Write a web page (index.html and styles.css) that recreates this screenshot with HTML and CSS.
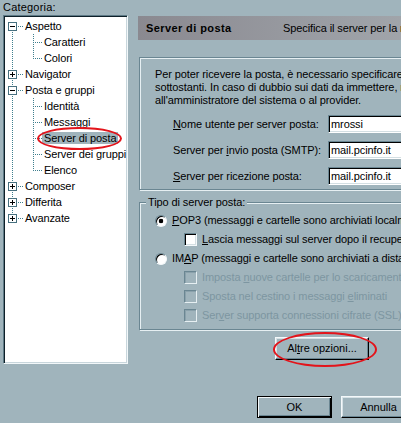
FILE: index.html
```html
<!DOCTYPE html>
<html lang="it">
<head>
<meta charset="utf-8">
<title>Preferenze – Server di posta</title>
<link rel="stylesheet" href="styles.css">
</head>
<body>
<div class="window">
  <aside class="cat">
    <div class="cat-label">Categoria:</div>
    <div class="tree">
      <div class="row"><span class="g root-first"><span class="box minus"></span></span><span class="lbl">Aspetto</span></div>
      <div class="row"><span class="g root-pass"></span><span class="c c-mid"></span><span class="lbl">Caratteri</span></div>
      <div class="row"><span class="g root-pass"></span><span class="c c-last"></span><span class="lbl">Colori</span></div>
      <div class="row"><span class="g root-mid"><span class="box plus"></span></span><span class="lbl">Navigator</span></div>
      <div class="row"><span class="g root-mid"><span class="box minus"></span></span><span class="lbl">Posta e gruppi</span></div>
      <div class="row"><span class="g root-pass"></span><span class="c c-mid"></span><span class="lbl">Identità</span></div>
      <div class="row"><span class="g root-pass"></span><span class="c c-mid"></span><span class="lbl">Messaggi</span></div>
      <div class="row"><span class="g root-pass"></span><span class="c c-mid"></span><span class="lbl sel">Server di posta<span class="mark mark-tree"></span></span></div>
      <div class="row"><span class="g root-pass"></span><span class="c c-mid"></span><span class="lbl">Server dei gruppi</span></div>
      <div class="row"><span class="g root-pass"></span><span class="c c-last"></span><span class="lbl">Elenco</span></div>
      <div class="row"><span class="g root-mid"><span class="box plus"></span></span><span class="lbl">Composer</span></div>
      <div class="row"><span class="g root-mid"><span class="box plus"></span></span><span class="lbl">Differita</span></div>
      <div class="row"><span class="g root-last"><span class="box plus"></span></span><span class="lbl">Avanzate</span></div>
    </div>
  </aside>

  <main class="main">
    <div class="header"><span class="title">Server di posta</span><span class="subtitle">Specifica il server per la ricezione della posta</span></div>

    <section class="group info">
      <p>Per poter ricevere la posta, è necessario specificare i dati</p>
      <p>sottostanti. In caso di dubbio sui dati da immettere, rivolgersi</p>
      <p>all'amministratore del sistema o al provider.</p>
      <div class="form">
        <span class="flabel"><u>N</u>ome utente per server posta:</span><span class="field">mrossi</span>
        <span class="flabel">Server per <u>i</u>nvio posta (SMTP):</span><span class="field">mail.pcinfo.it</span>
        <span class="flabel"><u>S</u>erver per ricezione posta:</span><span class="field">mail.pcinfo.it</span>
      </div>
    </section>

    <section class="group type">
      <div class="legend">Tipo di server posta:</div>
      <div class="opts">
        <div class="opt"><span class="radio on"></span><span><u>P</u>OP3 (messaggi e cartelle sono archiviati localmente)</span></div>
        <div class="opt sub"><span class="check"></span><span><u>L</u>ascia messaggi sul server dopo il recupero</span></div>
        <div class="opt"><span class="radio"></span><span>IM<u>A</u>P (messaggi e cartelle sono archiviati a distanza)</span></div>
        <div class="opt sub dis"><span class="check off"></span><span>Imposta <u>n</u>uove cartelle per lo scaricamento</span></div>
        <div class="opt sub dis"><span class="check off"></span><span>Sposta nel cestino i messaggi <u>e</u>liminati</span></div>
        <div class="opt sub dis"><span class="check off"></span><span>Ser<u>v</u>er supporta connessioni cifrate (SSL)</span></div>
      </div>
    </section>

    <div class="more"><button class="btn btn-more" type="button">Al<u>t</u>re opzioni...</button><span class="mark mark-btn"></span></div>

    <div class="actions">
      <button class="btn btn-ok" type="button">OK</button>
      <button class="btn btn-cancel" type="button">Annulla</button>
    </div>
  </main>
</div>
</body>
</html>
```
FILE: styles.css
```css
* { box-sizing: border-box; }
html, body { margin: 0; padding: 0; width: 401px; height: 423px; overflow: hidden; }
body {
  background: #a0b4bc;
  color: #000;
  font: 11px/13px "Liberation Sans", Arial, sans-serif;
  letter-spacing: -0.1px;
}
u { text-decoration: underline; text-underline-offset: 1px; }

.window { display: flex; width: 480px; height: 423px; }

/* ---------- left: categories ---------- */
.cat { width: 138px; flex: none; padding-left: 3px; }
.cat-label { height: 15px; line-height: 14px; letter-spacing: 0.2px; }
.tree {
  width: 125px; height: 349px;
  background: #fff;
  border: 1px solid; border-color: #5e7a86 #f2f7f9 #f2f7f9 #5e7a86;
  box-shadow: inset 1px 1px 0 #0e2029, inset -1px -1px 0 #c8d6dc;
  padding: 2px 0 0 1px;
}
.row { display: flex; height: 16px; }
.g, .c { flex: none; height: 16px; }
.g { width: 18px; }
.c { width: 19px; }

.root-pass {
  background: repeating-linear-gradient(to bottom, #3f7f8e 0 1px, transparent 1px 2px) 7px 0 / 1px 16px no-repeat;
}
.root-first {
  background:
    repeating-linear-gradient(to bottom, #3f7f8e 0 1px, transparent 1px 2px) 7px 8px / 1px 8px no-repeat,
    repeating-linear-gradient(to right, #3f7f8e 0 1px, transparent 1px 2px) 13px 8px / 5px 1px no-repeat;
}
.root-mid {
  background:
    repeating-linear-gradient(to bottom, #3f7f8e 0 1px, transparent 1px 2px) 7px 0 / 1px 16px no-repeat,
    repeating-linear-gradient(to right, #3f7f8e 0 1px, transparent 1px 2px) 13px 8px / 5px 1px no-repeat;
}
.root-last {
  background:
    repeating-linear-gradient(to bottom, #3f7f8e 0 1px, transparent 1px 2px) 7px 0 / 1px 8px no-repeat,
    repeating-linear-gradient(to right, #3f7f8e 0 1px, transparent 1px 2px) 13px 8px / 5px 1px no-repeat;
}
.c-mid {
  background:
    repeating-linear-gradient(to bottom, #3f7f8e 0 1px, transparent 1px 2px) 10px 0 / 1px 16px no-repeat,
    repeating-linear-gradient(to right, #3f7f8e 0 1px, transparent 1px 2px) 12px 8px / 7px 1px no-repeat;
}
.c-last {
  background:
    repeating-linear-gradient(to bottom, #3f7f8e 0 1px, transparent 1px 2px) 10px 0 / 1px 9px no-repeat,
    repeating-linear-gradient(to right, #3f7f8e 0 1px, transparent 1px 2px) 12px 8px / 7px 1px no-repeat;
}

.box {
  display: block;
  width: 9px; height: 9px;
  margin: 4px 0 0 3px;
  border: 1px solid #47707f;
  background-color: #fff;
}
.box.minus {
  background: linear-gradient(#000, #000) 1px 3px / 5px 1px no-repeat, #fff;
}
.box.plus {
  background:
    linear-gradient(#000, #000) 1px 3px / 5px 1px no-repeat,
    linear-gradient(#000, #000) 3px 1px / 1px 5px no-repeat,
    #fff;
}

.lbl { padding: 0 2px; line-height: 16px; white-space: nowrap; }
.lbl.sel {
  position: relative;
  background: #a0b4bc;
  height: 12px; line-height: 12px;
  margin-top: 2px;
}

.mark {
  position: absolute;
  border: 2px solid #e3141b;
  border-radius: 50%;
  pointer-events: none;
}
.mark-tree { left: -5px; top: -5px; right: -4px; bottom: -6px; }

/* ---------- right: panel ---------- */
.main { width: 340px; flex: none; display: flex; flex-direction: column; align-items: flex-start; }

.header {
  margin-top: 16px;
  width: 100%; height: 24px;
  display: flex; align-items: center;
  padding-left: 8px;
  background: linear-gradient(to right, #8a8990, #9a9da3 55%, #a7acb1);
  white-space: nowrap;
}
.title { width: 137px; flex: none; font-weight: bold; letter-spacing: .4px; }
.subtitle { flex: none; }

.group {
  width: 339px;
  margin-left: 1px;
  border: 1px solid #6a8692;
  box-shadow: inset 1px 1px 0 #e6eff2, 1px 1px 0 #e6eff2;
}

.info { margin-top: 17px; padding: 10px 0 4px 15px; }
.info p { margin: 0; white-space: nowrap; line-height: 13px; }

.form {
  display: grid;
  grid-template-columns: 155px 130px;
  row-gap: 8px;
  align-items: center;
  margin: 8px 0 0 18px;
}
.flabel { white-space: nowrap; }
.field {
  height: 18px;
  background: #fff;
  border: 1px solid; border-color: #6a8692 #fff #fff #6a8692;
  box-shadow: inset 1px 1px 0 #000, inset -1px -1px 0 #d4dfe3;
  padding: 0 2px 0 2px;
  line-height: 16px;
  white-space: nowrap;
}

.type { margin-top: 12px; padding-bottom: 4px; }
.legend {
  width: max-content;
  margin: -7px 0 0 6px;
  padding: 0 2px;
  background: #a0b4bc;
  line-height: 13px;
}
.opts { margin-top: 2px; }
.opt { display: flex; align-items: center; height: 19px; padding-left: 15px; white-space: nowrap; }
.opt.sub { padding-left: 44px; }
.opt.dis { color: #7d96a1; }

.radio {
  flex: none;
  width: 12px; height: 12px;
  margin-right: 5px;
  border-radius: 50%;
  border: 1px solid; border-color: #6a8692 #f4f8fa #f4f8fa #6a8692;
  box-shadow: inset 1px 1px 0 #000;
  background: #fff;
}
.radio.on { background: radial-gradient(circle at 5px 5px, #000 0 2px, #fff 2.6px); }

.check {
  flex: none;
  width: 13px; height: 13px;
  margin-right: 5px;
  background: #fff;
  border: 1px solid; border-color: #6a8692 #f4f8fa #f4f8fa #6a8692;
  box-shadow: inset 1px 1px 0 #000, inset -1px -1px 0 #d4dfe3;
}
.check.off {
  background: transparent;
  border-color: #6a8692 #e6eff2 #e6eff2 #6a8692;
  box-shadow: inset 1px 1px 0 #8aa1ab;
}

.btn {
  font: inherit; color: #000;
  padding: 0;
  background: #a0b4bc;
  border: 1px solid; border-color: #f4f8fa #000 #000 #f4f8fa;
  box-shadow: inset -1px -1px 0 #6a8692, inset 1px 1px 0 #d6e2e6;
  cursor: default;
}
.more { position: relative; margin: 7px 0 0 137px; }
.btn-more { display: block; width: 94px; height: 23px; }
.mark-btn { left: -2px; top: -5px; right: -8px; bottom: -7px; }

.actions { display: flex; gap: 9px; margin: 36px 0 0 119px; }
.btn-ok, .btn-cancel { width: 75px; height: 22px; }
.btn-ok {
  border: 1px solid #000;
  box-shadow: inset 1px 1px 0 #f4f8fa, inset -1px -1px 0 #000, inset -2px -2px 0 #6a8692;
}
```
